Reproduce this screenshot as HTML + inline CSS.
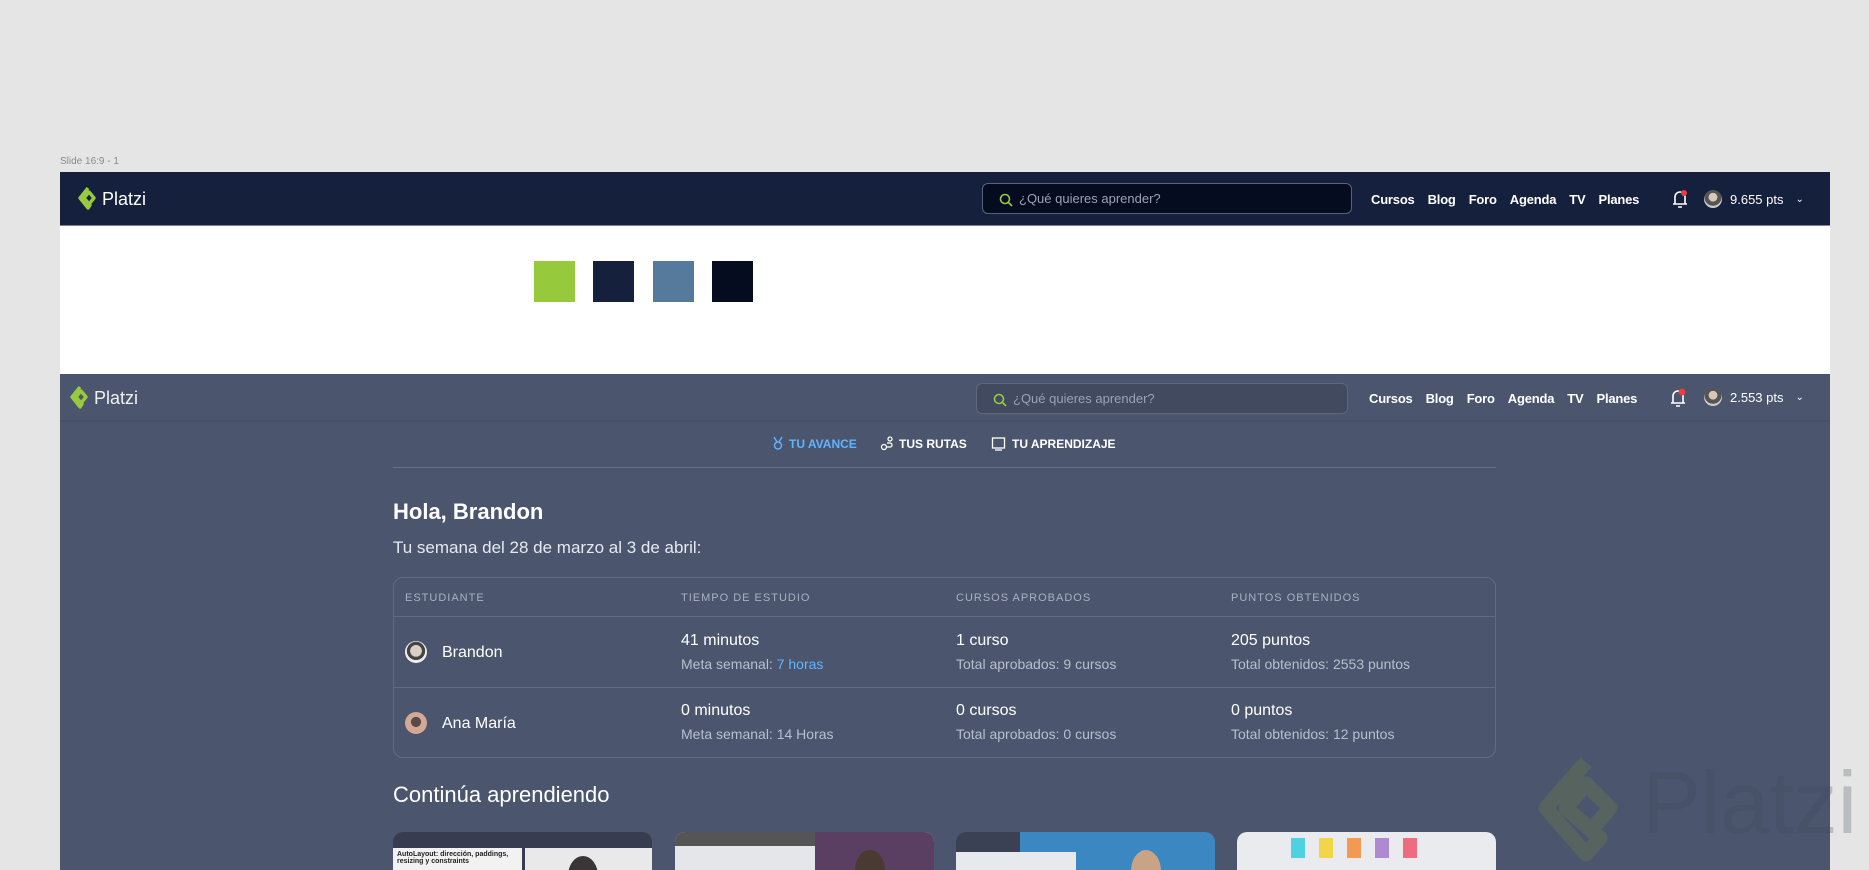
<!DOCTYPE html>
<html><head><meta charset="utf-8">
<style>
*{margin:0;padding:0;box-sizing:border-box}
body{width:1869px;height:870px;overflow:hidden;background:#e5e5e5;font-family:"Liberation Sans",sans-serif;position:relative}
.abs{position:absolute}
.frame{left:60px;top:172px;width:1770px;height:698px;background:#4b566e;overflow:hidden}
.nav{position:absolute;left:0;width:1770px;height:54px}
.logo{position:absolute;left:18px;top:14px;display:flex;align-items:center;color:#fff;font-size:18px}
.search{position:absolute;border-radius:6px;color:#9aa3b5;font-size:13px;display:flex;align-items:center;padding-left:36px}
.search svg{position:absolute;left:16px;top:9px}
.links{position:absolute;display:flex;gap:13px;color:#fff;font-weight:bold;font-size:13px;letter-spacing:-0.2px}
.pts{position:absolute;color:#fff;font-size:13px;display:flex;align-items:center}
.av{width:18px;height:18px;border-radius:50%;background:radial-gradient(circle at 50% 40%,#d8c8b8 0 30%,#555 32% 60%,#ccc 62%);margin-right:8px}
.t{position:absolute;color:#fff}
.muted{color:#b7bfcd}
.hdr{position:absolute;top:420px;font-size:11px;color:#a8b0c0;letter-spacing:1px}
.card{position:absolute;top:660px;width:259px;height:60px;border-radius:10px 10px 0 0;overflow:hidden}
</style></head><body>
<div class="abs" style="left:60px;top:156px;font-size:10px;color:#8a8a8a">Slide 16:9 - 1</div>
<div class="abs frame">
 <div class="nav" style="top:0;background:#14203c;border-bottom:1px solid #7a8699">
  <div class="logo"><svg width="22" height="26" viewBox="0 0 22 26"><path d="M10 2 L2 12 L10 22 L12 19 L6 12 L11 6 L16 12 L11 18" fill="none" stroke="#98ca3f" stroke-width="3.4" stroke-linejoin="round"/></svg><span style="margin-left:2px">Platzi</span></div>
  <div class="search" style="left:922px;top:11px;width:370px;height:31px;background:#050c1f;border:1px solid #56637d">
   <svg width="14" height="14" viewBox="0 0 14 14"><circle cx="6" cy="6" r="4.5" fill="none" stroke="#98ca3f" stroke-width="1.6"/><path d="M9.5 9.5 L13 13" stroke="#98ca3f" stroke-width="1.6"/></svg>¿Qué quieres aprender?</div>
  <div class="links" style="left:1311px;top:20px"><span>Cursos</span><span>Blog</span><span>Foro</span><span>Agenda</span><span>TV</span><span>Planes</span></div>
  <svg class="abs" style="left:1611px;top:16px" width="18" height="22" viewBox="0 0 18 22"><path d="M4 16 V9 a5 5 0 0 1 10 0 V16 H2 H16 M7 19 H11" fill="none" stroke="#fff" stroke-width="1.6"/><circle cx="13" cy="5" r="3" fill="#f03c3c"/></svg>
  <div class="pts" style="left:1644px;top:18px"><div class="av"></div>9.655 pts<span style="margin-left:12px;font-size:10px">&#8964;</span></div>
 </div>
 <div class="abs" style="left:0;top:54px;width:1770px;height:148px;background:#fff">
  <div class="abs" style="left:474px;top:35px;width:41px;height:41px;background:#97c93d"></div>
  <div class="abs" style="left:533px;top:35px;width:41px;height:41px;background:#14203c"></div>
  <div class="abs" style="left:593px;top:35px;width:41px;height:41px;background:#567a9c"></div>
  <div class="abs" style="left:652px;top:35px;width:41px;height:41px;background:#050c1f"></div>
 </div>
 <div class="nav" style="top:202px;height:48px;background:#4b566e;border-bottom:2px solid #465167">
  <div class="logo" style="left:10px;top:11px"><svg width="22" height="26" viewBox="0 0 22 26"><path d="M10 2 L2 12 L10 22 L12 19 L6 12 L11 6 L16 12 L11 18" fill="none" stroke="#98ca3f" stroke-width="3.4" stroke-linejoin="round"/></svg><span style="margin-left:2px;color:#f0f0f0">Platzi</span></div>
  <div class="search" style="left:916px;top:9px;width:372px;height:31px;background:#414a5e;border:1px solid #5d6880">
   <svg width="14" height="14" viewBox="0 0 14 14"><circle cx="6" cy="6" r="4.5" fill="none" stroke="#98ca3f" stroke-width="1.6"/><path d="M9.5 9.5 L13 13" stroke="#98ca3f" stroke-width="1.6"/></svg>¿Qué quieres aprender?</div>
  <div class="links" style="left:1309px;top:17px"><span>Cursos</span><span>Blog</span><span>Foro</span><span>Agenda</span><span>TV</span><span>Planes</span></div>
  <svg class="abs" style="left:1609px;top:13px" width="18" height="22" viewBox="0 0 18 22"><path d="M4 16 V9 a5 5 0 0 1 10 0 V16 H2 H16 M7 19 H11" fill="none" stroke="#fff" stroke-width="1.6"/><circle cx="13" cy="5" r="3.4" fill="#f03c3c"/></svg>
  <div class="pts" style="left:1644px;top:14px"><div class="av"></div>2.553 pts<span style="margin-left:12px;font-size:10px">&#8964;</span></div>
 </div>
 <div class="abs" style="left:712px;top:264px;font-size:12px;font-weight:bold;color:#5fb4ff;display:flex;align-items:center">
  <svg width="12" height="15" viewBox="0 0 12 15"><circle cx="6" cy="9.5" r="3.5" fill="none" stroke="#5fb4ff" stroke-width="1.4"/><path d="M2 1 L5 6 M10 1 L7 6" stroke="#5fb4ff" stroke-width="1.4"/></svg><span style="margin-left:5px">TU AVANCE</span></div>
 <div class="abs" style="left:820px;top:264px;font-size:12px;font-weight:bold;color:#fff;display:flex;align-items:center">
  <svg width="14" height="15" viewBox="0 0 14 15"><circle cx="4" cy="11" r="2.5" fill="none" stroke="#fff" stroke-width="1.3"/><circle cx="10" cy="3" r="2" fill="none" stroke="#fff" stroke-width="1.3"/><path d="M6 11 H10 a2 2 0 0 0 0-4 H7" fill="none" stroke="#fff" stroke-width="1.3"/></svg><span style="margin-left:5px">TUS RUTAS</span></div>
 <div class="abs" style="left:931px;top:264px;font-size:12px;font-weight:bold;color:#fff;display:flex;align-items:center">
  <svg width="15" height="15" viewBox="0 0 15 15"><rect x="1.5" y="2" width="12" height="10" fill="none" stroke="#fff" stroke-width="1.3"/><path d="M4 14 H11" stroke="#fff" stroke-width="1.3"/></svg><span style="margin-left:6px">TU APRENDIZAJE</span></div>
 <div class="abs" style="left:333px;top:295px;width:1103px;height:1px;background:#64708a"></div>
 <div class="t" style="left:333px;top:327px;font-size:22px;font-weight:bold">Hola, Brandon</div>
 <div class="t" style="left:333px;top:366px;font-size:17px;color:#e6e9ef">Tu semana del 28 de marzo al 3 de abril:</div>
 <div class="abs" style="left:333px;top:405px;width:1103px;height:181px;border:1px solid #606b83;border-radius:10px"></div>
 <div class="abs" style="left:334px;top:444px;width:1101px;height:1px;background:#606b83"></div>
 <div class="abs" style="left:334px;top:515px;width:1101px;height:1px;background:#606b83"></div>
 <div class="hdr" style="left:345px">ESTUDIANTE</div>
 <div class="hdr" style="left:621px">TIEMPO DE ESTUDIO</div>
 <div class="hdr" style="left:896px">CURSOS APROBADOS</div>
 <div class="hdr" style="left:1171px">PUNTOS OBTENIDOS</div>
 <div class="abs" style="left:345px;top:469px;width:22px;height:22px;border-radius:50%;background:radial-gradient(circle at 50% 45%,#d9cfc4 0 35%,#444 37% 55%,#eee 57%)"></div>
 <div class="t" style="left:382px;top:472px;font-size:16px">Brandon</div>
 <div class="t" style="left:621px;top:460px;font-size:16px">41 minutos</div>
 <div class="t muted" style="left:621px;top:484px;font-size:14px">Meta semanal: <span style="color:#5fb4ff">7 horas</span></div>
 <div class="t" style="left:896px;top:460px;font-size:16px">1 curso</div>
 <div class="t muted" style="left:896px;top:484px;font-size:14px">Total aprobados: 9 cursos</div>
 <div class="t" style="left:1171px;top:460px;font-size:16px">205 puntos</div>
 <div class="t muted" style="left:1171px;top:484px;font-size:14px">Total obtenidos: 2553 puntos</div>
 <div class="abs" style="left:345px;top:540px;width:22px;height:22px;border-radius:50%;background:radial-gradient(circle at 50% 45%,#5a4a48 0 30%,#d4a894 32%)"></div>
 <div class="t" style="left:382px;top:543px;font-size:16px">Ana María</div>
 <div class="t" style="left:621px;top:530px;font-size:16px">0 minutos</div>
 <div class="t muted" style="left:621px;top:554px;font-size:14px">Meta semanal: 14 Horas</div>
 <div class="t" style="left:896px;top:530px;font-size:16px">0 cursos</div>
 <div class="t muted" style="left:896px;top:554px;font-size:14px">Total aprobados: 0 cursos</div>
 <div class="t" style="left:1171px;top:530px;font-size:16px">0 puntos</div>
 <div class="t muted" style="left:1171px;top:554px;font-size:14px">Total obtenidos: 12 puntos</div>
 <div class="t" style="left:333px;top:610px;font-size:22px">Continúa aprendiendo</div>
 <div class="card" style="left:333px;background:#373d4e"><div class="abs" style="left:0;top:16px;width:129px;height:50px;background:#f2f2f2"></div><div class="abs" style="left:4px;top:19px;font-size:7px;color:#222;font-weight:bold">AutoLayout: dirección, paddings,<br>resizing y constraints</div><div class="abs" style="left:132px;top:16px;width:127px;height:50px;background:#e9e9e9"></div><div class="abs" style="left:175px;top:24px;width:30px;height:40px;border-radius:50%;background:#3a3536"></div></div>
 <div class="card" style="left:615px;background:#e5e6ea"><div class="abs" style="left:0;top:0;width:140px;height:14px;background:#555"></div><div class="abs" style="left:140px;top:0;width:119px;height:60px;background:#5a3f63"></div><div class="abs" style="left:180px;top:18px;width:30px;height:40px;border-radius:50%;background:#4a3a34"></div></div>
 <div class="card" style="left:896px;background:#3a87c2"><div class="abs" style="left:0;top:0;width:64px;height:20px;background:#3a4153"></div><div class="abs" style="left:0;top:20px;width:120px;height:40px;background:#e8e9ec"></div><div class="abs" style="left:175px;top:18px;width:30px;height:42px;border-radius:50%;background:#c9a385"></div></div>
 <div class="card" style="left:1177px;background:#e9ebee"><div class="abs" style="left:54px;top:6px;width:14px;height:20px;background:#4fd1e4"></div><div class="abs" style="left:82px;top:6px;width:14px;height:20px;background:#f3d54a"></div><div class="abs" style="left:110px;top:6px;width:14px;height:20px;background:#f29a52"></div><div class="abs" style="left:138px;top:6px;width:14px;height:20px;background:#b08ad0"></div><div class="abs" style="left:166px;top:6px;width:14px;height:20px;background:#ee6b82"></div></div>
 <svg class="abs" style="left:1478px;top:584px" width="90" height="110" viewBox="0 0 90 110"><path d="M48 6 L8 52 L48 98 L62 82 L28 52 L48 28 L72 52 L50 78" fill="none" stroke="#56635f" stroke-width="15" stroke-linejoin="round"/></svg>
</div>
<div class="abs" style="left:1642px;top:752px;font-size:88px;color:rgba(60,68,82,0.25)">Platzi</div>
</body></html>
